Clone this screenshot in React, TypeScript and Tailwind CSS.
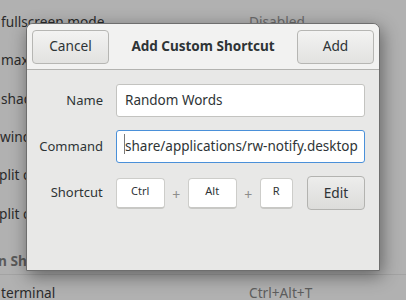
import React from "react";

const font = { fontFamily: '"Noto Sans", "DejaVu Sans", sans-serif' };

function BgRow({ left, right, shift = 0 }: { left: string; right?: string; shift?: number }) {
  return (
    <div className="relative h-[38.4px] flex items-center text-[13.7px] text-[#2b2b2b]">
      <span className="whitespace-nowrap" style={{ marginLeft: shift }}>{left}</span>
      {right ? <span className="absolute left-[249px] text-[#6a6a6a] whitespace-nowrap">{right}</span> : null}
    </div>
  );
}

function Key({ label, w }: { label: string; w: string }) {
  return (
    <div
      className={`${w} h-[31px] bg-white border border-[#cdcdca] border-b-2 border-b-[#c8c8c5] rounded-[4px] flex items-center justify-center text-[11px] text-[#2e3436] pb-[2px]`}
    >
      {label}
    </div>
  );
}

function Plus() {
  return <div className="w-[23px] text-center text-[14px] text-[#8d8d8b] pt-[3px]">+</div>;
}

export default function App() {
  return (
    <div className="relative w-[406px] h-[300px] overflow-hidden bg-[#b1b1b1]" style={font}>
      {/* background settings list */}
      <div className="flex flex-col pt-[3px]">
        <BgRow left="fullscreen mode" right="Disabled" shift={1} />
        <BgRow left="maximize" shift={1} />
        <BgRow left="shade" shift={1} />
        <BgRow left="windows" shift={0} />
        <BgRow left="plit on left" shift={-1} />
        <BgRow left="plit on right" shift={-1} />
        <div className="h-[41px] flex items-end pb-[3px] text-[13.7px] font-bold text-[#5a5a5a]">
          <span className="whitespace-nowrap -ml-[2px]">n Shortcuts</span>
        </div>
        <div className="h-px bg-[#a3a3a3]" />
        <div className="relative h-[36px] flex items-center text-[13.7px] text-[#2b2b2b]">
          <span className="ml-[1px]">terminal</span>
          <span className="absolute left-[249px] text-[#5e5e5e]">Ctrl+Alt+T</span>
        </div>
      </div>

      {/* dialog */}
      <div className="absolute left-[26px] top-[23px] w-[354px] h-[248px] flex flex-col border border-[#6e6e6e] rounded-t-[7px] bg-[#e8e8e7] shadow-[2px_5px_18px_rgba(0,0,0,0.45)] overflow-hidden">
        <div className="h-[46px] shrink-0 flex items-center justify-between px-[5px] bg-[#f2f2f1] border-b border-[#b3b3b0]">
          <button className="w-[77px] h-[34px] rounded-[4px] border border-[#b6b6b3] bg-gradient-to-b from-[#f3f3f2] to-[#e2e2e0] text-[13.7px] text-[#2e3436]">
            Cancel
          </button>
          <div className="text-[13.5px] font-bold text-[#2e3436]">Add Custom Shortcut</div>
          <button className="w-[77px] h-[34px] rounded-[4px] border border-[#b6b6b3] bg-gradient-to-b from-[#f3f3f2] to-[#e2e2e0] text-[13.7px] text-[#2e3436]">
            Add
          </button>
        </div>

        <div className="flex flex-col gap-[13px] pt-[14px] pr-[14px]">
          <div className="flex items-center h-[33px]">
            <div className="w-[76px] text-right text-[13px] text-[#2e3436]">Name</div>
            <div className="ml-[13px] w-[249px] h-[33px] bg-white border border-[#c3c3c0] rounded-[3px] flex items-center pl-[8px] text-[13.5px] text-[#2e3436]">
              Random Words
            </div>
          </div>
          <div className="flex items-center h-[33px]">
            <div className="w-[76px] text-right text-[13px] text-[#2e3436]">Command</div>
            <div className="ml-[13px] w-[249px] h-[33px] bg-white border border-[#4a90d9] rounded-[3px] flex items-center pl-[8px] text-[13.5px] text-[#2e3436] overflow-hidden whitespace-nowrap">
              <span className="relative">
                <span className="absolute -left-[1px] top-[-2px] w-px h-[20px] bg-[#7a7a7a]" />
                share/applications/rw-notify.desktop
              </span>
            </div>
          </div>
          <div className="flex items-center h-[34px]">
            <div className="w-[76px] text-right text-[13px] text-[#2e3436]">Shortcut</div>
            <div className="ml-[13px] w-[250px] flex items-center">
              <Key label="Ctrl" w="w-[49px]" />
              <Plus />
              <Key label="Alt" w="w-[49px]" />
              <Plus />
              <Key label="R" w="w-[33px]" />
              <button className="ml-auto w-[58px] h-[34px] rounded-[4px] border border-[#b3b3b0] bg-gradient-to-b from-[#ededec] to-[#dcdcda] text-[13.7px] text-[#2e3436]">
                Edit
              </button>
            </div>
          </div>
        </div>
      </div>
    </div>
  );
}
